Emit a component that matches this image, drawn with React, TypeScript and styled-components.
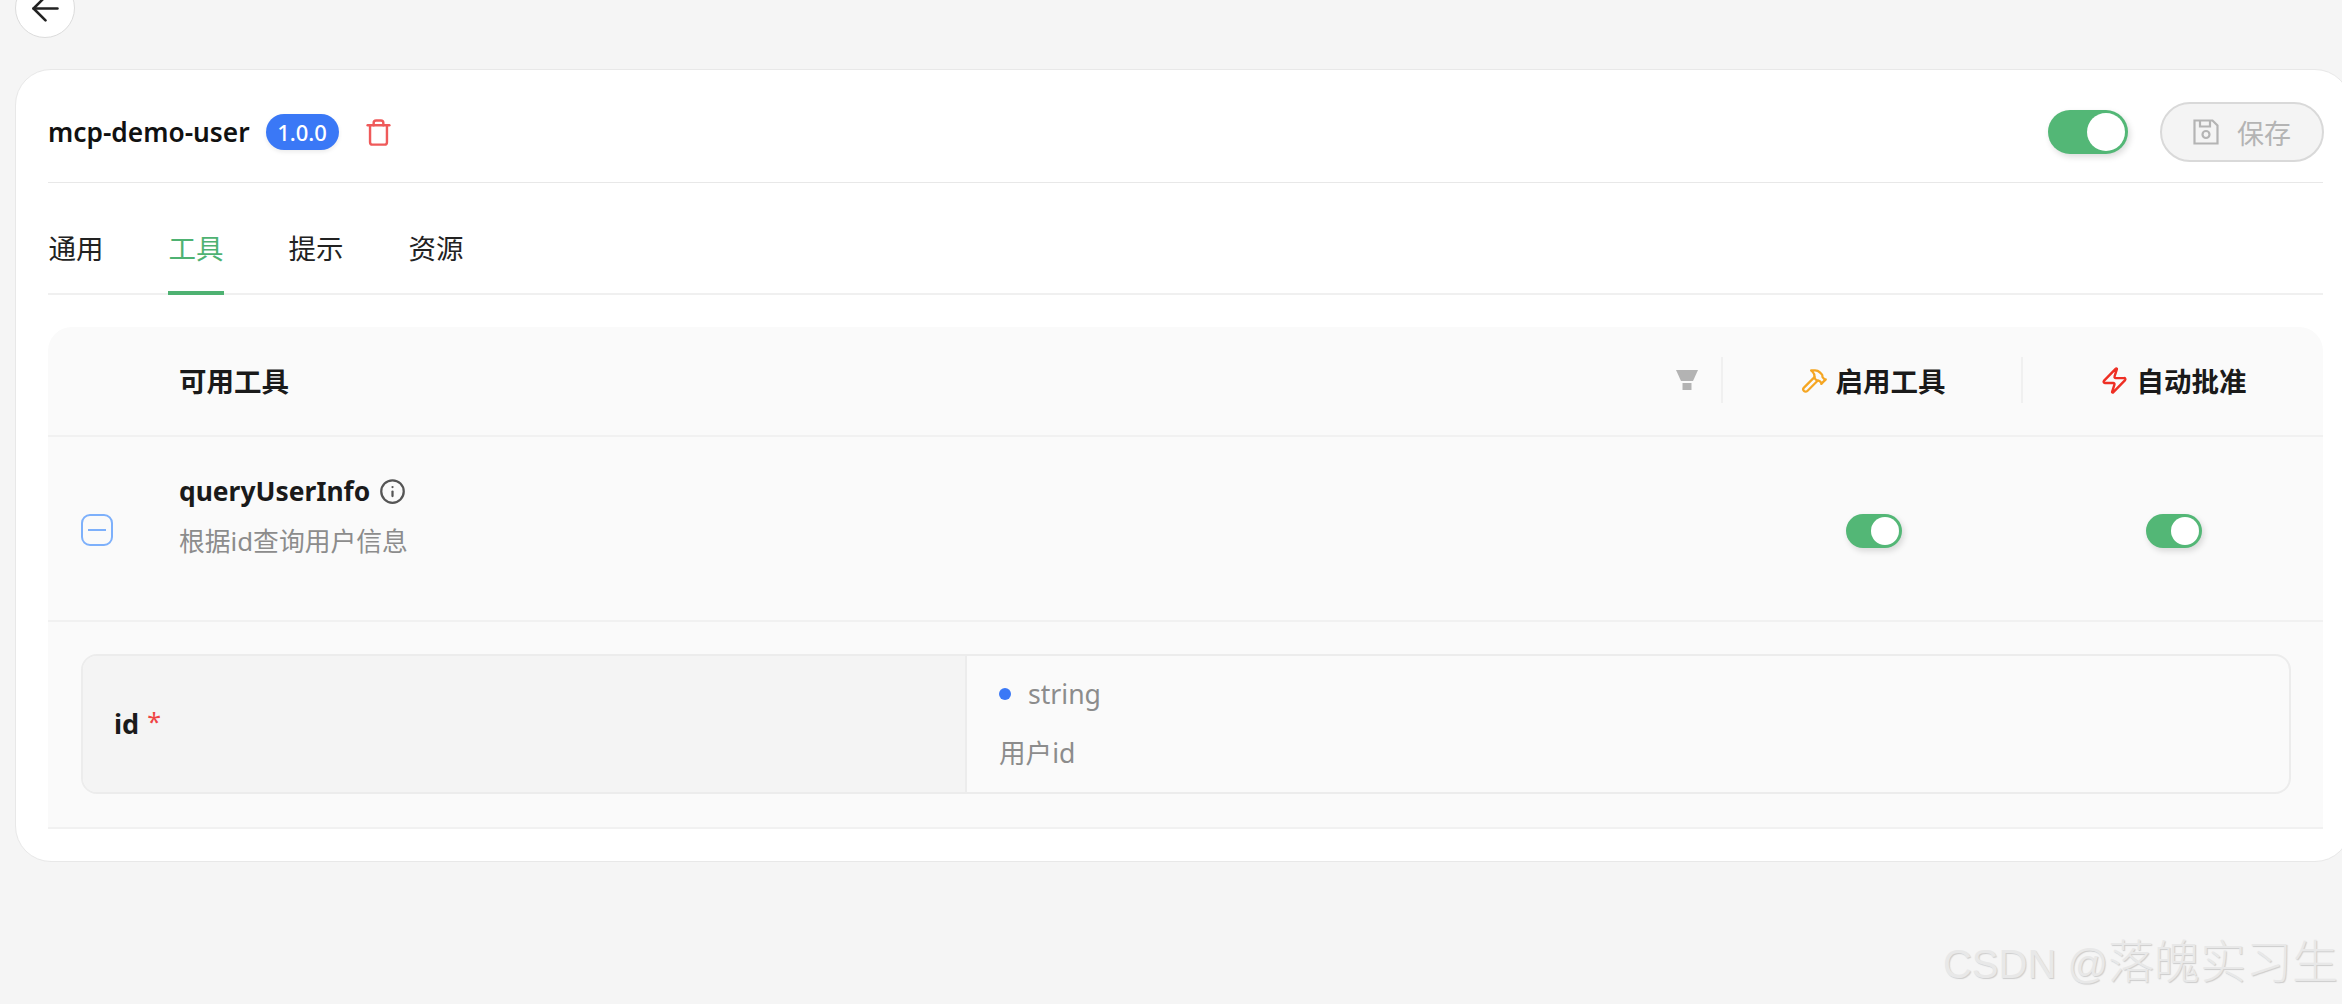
import React from 'react';
import styled, { createGlobalStyle } from 'styled-components';
import { ArrowLeft, Hammer, Info, Trash, Zap } from 'lucide-react';

const GlobalStyle = createGlobalStyle`
  html, body {
    margin: 0;
    height: 100%;
    overflow: hidden;
    background: #f5f5f5;
  }
  body {
    font-family: "Noto Sans", "Noto Sans CJK SC", sans-serif;
    color: #1a1a1a;
  }
  * { box-sizing: border-box; }
`;

const Page = styled.div`
  position: relative;
  width: 2342px;
  height: 1004px;
  overflow: hidden;
  padding-left: 15px;
`;

const BackButton = styled.button`
  display: flex;
  align-items: center;
  justify-content: center;
  width: 60px;
  height: 60px;
  margin: -22px 0 31px;
  padding: 0;
  border: 1.5px solid #dcdcdc;
  border-radius: 50%;
  background: #fff;
  color: #222;
  svg { flex: none; }
`;

const Card = styled.div`
  width: 2336px;
  padding: 0 27px 32px 32px;
  background: #fff;
  border: 1.5px solid #e8e8e8;
  border-radius: 36px;
`;

const Header = styled.div`
  display: flex;
  align-items: center;
  height: 113px;
  padding-top: 12px;
  border-bottom: 1.5px solid #e8e8e8;
`;

const Title = styled.span`
  font-size: 26.3px;
  font-weight: 600;
  color: #111;
`;

const Version = styled.span`
  display: inline-flex;
  align-items: center;
  justify-content: center;
  width: 73px;
  height: 36px;
  margin-left: 16px;
  border-radius: 18px;
  background: #3a78f6;
  color: #fff;
  font-size: 22px;
  font-weight: 500;
  box-shadow: 0 2px 4px rgba(0, 0, 0, 0.08);
`;

const DeleteIcon = styled(Trash)`
  margin-left: 25px;
  color: #ef5a5a;
`;

const HeaderRight = styled.div`
  display: flex;
  align-items: center;
  gap: 32px;
  margin: 0 -1px 0 auto;
`;

const Switch = styled.span<{ $big?: boolean }>`
  display: inline-block;
  position: relative;
  width: ${(p) => (p.$big ? 80 : 56)}px;
  height: ${(p) => (p.$big ? 44 : 34)}px;
  border-radius: 22px;
  background: #53b776;
  box-shadow: 2px 3px 6px rgba(0, 0, 0, 0.14);
  &::after {
    content: '';
    position: absolute;
    top: 3px;
    right: 3px;
    width: ${(p) => (p.$big ? 38 : 28)}px;
    height: ${(p) => (p.$big ? 38 : 28)}px;
    border-radius: 50%;
    background: #fff;
  }
`;

const SaveButton = styled.button`
  display: flex;
  align-items: center;
  justify-content: center;
  gap: 18px;
  width: 164px;
  height: 60px;
  padding: 0;
  border: 2px solid #d9d9d9;
  border-radius: 30px;
  background: #f4f4f4;
  color: #b4b4b4;
  font-family: inherit;
  font-size: 27px;
`;

const Tabs = styled.div`
  display: flex;
  gap: 64px;
  height: 112px;
  border-bottom: 2px solid #f0f0f0;
`;

const Tab = styled.div<{ $active?: boolean }>`
  display: flex;
  align-items: center;
  justify-content: center;
  width: 56px;
  height: 112px;
  padding-top: 20px;
  font-size: 27.5px;
  white-space: nowrap;
  color: ${(p) => (p.$active ? '#4eb272' : '#222')};
  border-bottom: 4px solid ${(p) => (p.$active ? '#4eb272' : 'transparent')};
`;

const Panel = styled.div`
  margin-top: 32px;
  background: #fafafa;
  border-radius: 24px 24px 0 0;
`;

const TableRow = styled.div<{ $head?: boolean }>`
  display: grid;
  grid-template-columns: 131px 1fr 300px 300px;
  align-items: center;
  height: ${(p) => (p.$head ? 110 : 185)}px;
  border-bottom: 2px solid #f1f1f1;
`;

const HeadTitle = styled.div`
  display: flex;
  align-items: center;
  justify-content: space-between;
  padding: 0 25px 3px 0;
  font-size: 27.5px;
  font-weight: 600;
`;

const HeadCell = styled.div`
  display: flex;
  align-items: center;
  justify-content: center;
  gap: 8px;
  height: 46px;
  margin: -2px 0 0 -2px;
  border-left: 2px solid #f0f0f0;
  font-size: 27.5px;
  font-weight: 600;
`;

const CollapseCell = styled.div`
  display: flex;
  justify-content: flex-start;
  padding: 2px 0 0 33px;
`;

const CollapseBox = styled.span`
  display: flex;
  align-items: center;
  justify-content: center;
  width: 32px;
  height: 32px;
  border: 2px solid #7db0fb;
  border-radius: 9px;
  &::after {
    content: '';
    width: 18px;
    height: 2px;
    background: #7db0fb;
  }
`;

const ToolInfo = styled.div`
  display: flex;
  flex-direction: column;
  gap: 14px;
  align-self: start;
  padding-top: 36px;
`;

const ToolName = styled.div`
  display: flex;
  align-items: center;
  gap: 9px;
  font-size: 26.4px;
  line-height: 36px;
  font-weight: 700;
  color: #1a1a1a;
  svg { color: #555; }
`;

const ToolDesc = styled.div`
  font-size: 25.8px;
  line-height: 36px;
  color: #8c8c8c;
`;

const SwitchCell = styled.div`
  display: flex;
  justify-content: center;
  padding: 4px 0 0 2px;
`;

const Detail = styled.div`
  padding: 32px 32px 33px 33px;
  border-bottom: 2px solid #f1f1f1;
`;

const DetailBox = styled.div`
  display: grid;
  grid-template-columns: 884px 1fr;
  height: 140px;
  border: 2px solid #ececec;
  border-radius: 16px;
  overflow: hidden;
`;

const ParamName = styled.div`
  display: flex;
  align-items: center;
  gap: 8px;
  padding: 0 0 2px 31px;
  background: #f4f4f4;
  border-right: 2px solid #ececec;
  font-size: 27px;
  font-weight: 700;
`;

const Required = styled.span`
  margin-top: -4px;
  font-size: 25px;
  color: #ef4444;
  font-weight: 400;
`;

const ParamInfo = styled.div`
  display: flex;
  flex-direction: column;
  gap: 23px;
  padding: 20px 0 0 32px;
  font-size: 26.6px;
  line-height: 36px;
  color: #8c8c8c;
`;

const ParamType = styled.div`
  display: flex;
  align-items: center;
  gap: 17px;
  &::before {
    content: '';
    width: 12px;
    height: 12px;
    border-radius: 50%;
    background: #3a78f6;
  }
`;

const Watermark = styled.div`
  position: absolute;
  right: 4px;
  bottom: 14px;
  font-family: "Liberation Sans", sans-serif;
  font-size: 40px;
  line-height: 52px;
  white-space: nowrap;
  color: #e8e8e8;
  text-shadow: 1px 1px 1px #cdcdcd;
`;

const WatermarkCjk = styled.span`
  font-family: "Noto Sans CJK SC", sans-serif;
  font-size: 46px;
  font-weight: 300;
`;

const FilterIcon = () => (
  <svg width="22" height="20" viewBox="0 0 22 20" fill="#b3b3b3">
    <path d="M0 0h22l-5 11H5z" />
    <rect x="6.5" y="13" width="9" height="7" />
  </svg>
);

const SaveIcon = () => (
  <svg width="26" height="26" viewBox="0 0 26 26" fill="none" stroke="currentColor" strokeWidth="2.2">
    <path d="M1.5 1.5h18l5 5v18h-23z" />
    <path d="M7 1.5v6h10v-6" />
    <circle cx="13" cy="15.5" r="3.5" />
  </svg>
);

const App = () => {
  return (
    <Page>
      <GlobalStyle />
      <BackButton>
        <ArrowLeft size={41} strokeWidth={1.5} />
      </BackButton>
      <Card>
        <Header>
          <Title>mcp-demo-user</Title>
          <Version>1.0.0</Version>
          <DeleteIcon size={29} strokeWidth={2} />
          <HeaderRight>
            <Switch $big />
            <SaveButton>
              <SaveIcon />
              保存
            </SaveButton>
          </HeaderRight>
        </Header>
        <Tabs>
          <Tab>通用</Tab>
          <Tab $active>工具</Tab>
          <Tab>提示</Tab>
          <Tab>资源</Tab>
        </Tabs>
        <Panel>
          <TableRow $head>
            <div />
            <HeadTitle>
              可用工具
              <FilterIcon />
            </HeadTitle>
            <HeadCell>
              <Hammer size={27} color="#f5a623" strokeWidth={2} />
              启用工具
            </HeadCell>
            <HeadCell>
              <Zap size={29} color="#ee2f24" strokeWidth={2} />
              自动批准
            </HeadCell>
          </TableRow>
          <TableRow>
            <CollapseCell>
              <CollapseBox />
            </CollapseCell>
            <ToolInfo>
              <ToolName>
                queryUserInfo
                <Info size={27} strokeWidth={2} />
              </ToolName>
              <ToolDesc>根据id查询用户信息</ToolDesc>
            </ToolInfo>
            <SwitchCell>
              <Switch />
            </SwitchCell>
            <SwitchCell>
              <Switch />
            </SwitchCell>
          </TableRow>
          <Detail>
            <DetailBox>
              <ParamName>
                id <Required>*</Required>
              </ParamName>
              <ParamInfo>
                <ParamType>string</ParamType>
                <div>用户id</div>
              </ParamInfo>
            </DetailBox>
          </Detail>
        </Panel>
      </Card>
      <Watermark>
        CSDN @<WatermarkCjk>落魄实习生</WatermarkCjk>
      </Watermark>
    </Page>
  );
};

export default App;
